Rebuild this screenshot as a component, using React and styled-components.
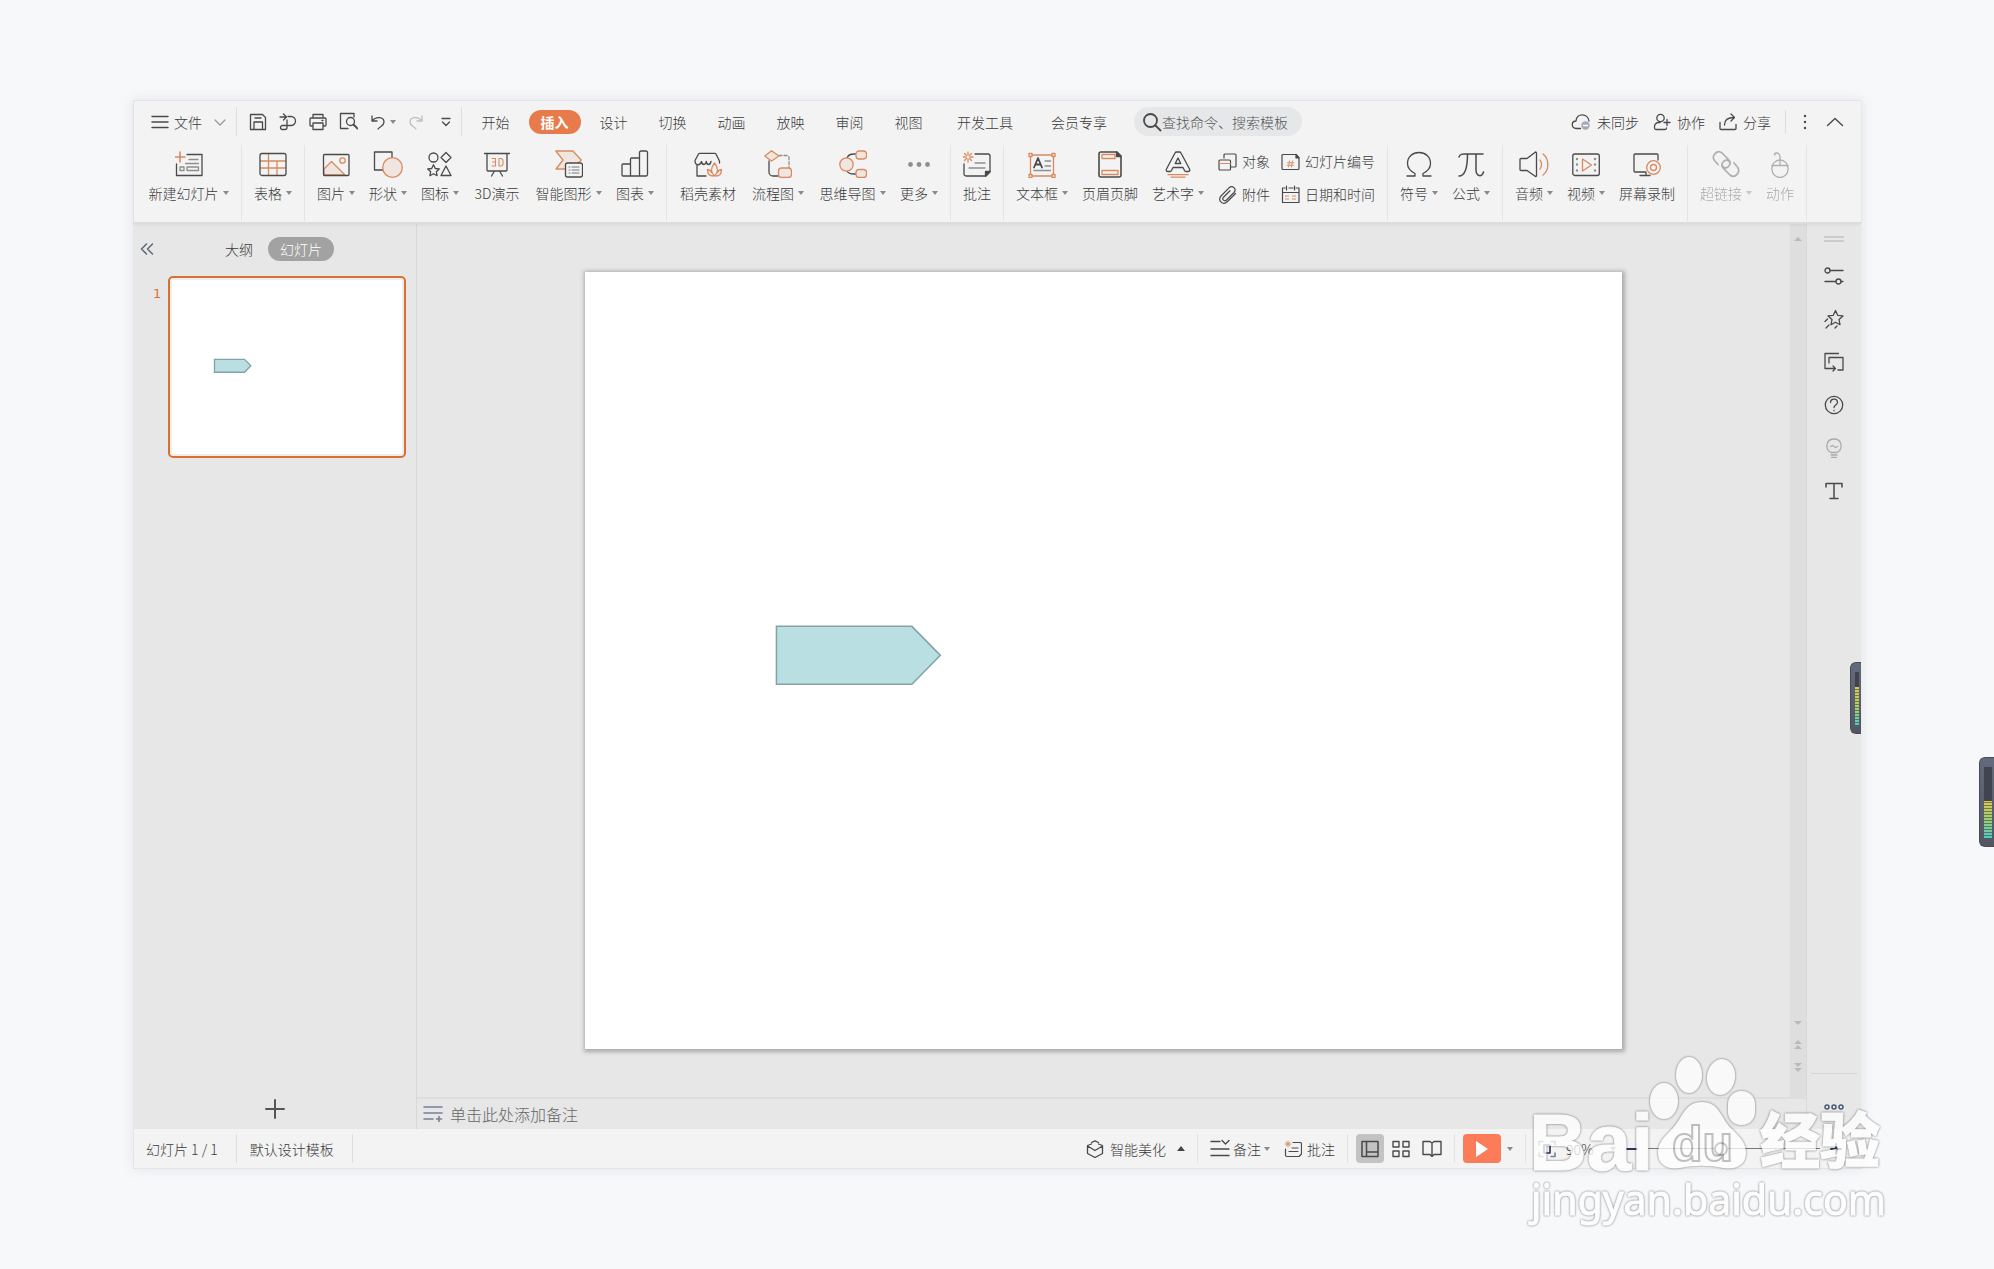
import React, { useState } from 'react';
import styled, { createGlobalStyle, css } from 'styled-components';

const ink = '#4a4a4a';
const accent = '#d98a60';
const accentFill = '#f1e5df';
const soft = '#8f8f8f';

const GlobalStyle = createGlobalStyle`
  * {
    box-sizing: border-box;
  }
  body {
    margin: 0;
    background: #f7f8fa;
    color: #3a3a3a;
    font-family: 'Noto Sans CJK SC', 'Noto Sans', sans-serif;
    font-size: 14px;
    font-weight: 300;
    line-height: 20px;
  }
  button,
  input,
  select {
    margin: 0;
    padding: 0;
    border: 0;
    background: none;
    color: inherit;
    font: inherit;
  }
`;

const Page = styled.div`
  position: relative;
  display: flex;
  min-height: 100vh;
  padding: 100px 132px 100px 133px;
  overflow: hidden;
`;

const AppWindow = styled.div`
  position: relative;
  display: flex;
  flex: 1;
  flex-direction: column;
  min-width: 0;
  border: 1px solid #e4e5e7;
  border-right-color: #ececee;
  background: #e7e7e7;
  box-shadow: 0 0 12px rgba(80, 90, 110, 0.12);
`;

const Header = styled.header`
  position: relative;
  background: #f3f3f3;
  border-bottom: 2px solid #dcdcdc;
  box-shadow: 0 1px 3px rgba(0, 0, 0, 0.06);
`;

const Row = styled.div`
  display: flex;
  align-items: center;
  gap: ${p => p.$gap || 0}px;
`;

const MenuRow = styled(Row)`
  height: 43px;
  padding: 0 17px 2px;
`;

const Divider = styled.span`
  flex: none;
  width: 1px;
  height: ${p => p.$height || 29}px;
  background: #dedede;
`;

const ToolButton = styled.button`
  display: flex;
  flex: none;
  align-items: center;
  gap: ${p => p.$gap || 5}px;
  height: 28px;
  white-space: nowrap;
`;

const CustomizeButton = styled(ToolButton)`
  padding-left: 5px;
`;

const QuickAccess = styled(Row)`
  padding: 0 10px 0 12px;
`;

const Tabs = styled.nav`
  display: flex;
  align-items: center;
  padding-left: 4px;
`;

const TabSlot = styled.div`
  display: flex;
  justify-content: center;
  width: ${p => (p.$wide ? 94 : 59)}px;
`;

const Pill = styled.button`
  height: 24px;
  padding: 0 12px;
  border-radius: 12px;
  white-space: nowrap;
  ${p =>
    p.$active &&
    css`
      background: ${p.$color};
      color: #fff;
      font-weight: ${p.$bold ? 700 : 300};
    `}
`;

const SearchBox = styled.label`
  display: flex;
  align-items: center;
  width: 168px;
  height: 29px;
  margin-left: 8px;
  padding: 0 8px;
  border-radius: 15px;
  background: #e6e7e9;
  input {
    width: 130px;
    outline: none;
  }
  input::placeholder {
    color: #555;
    opacity: 1;
  }
`;

const RightTools = styled(Row)`
  margin-left: auto;
`;

const Ribbon = styled.div`
  display: flex;
  height: 76px;
  margin: 1px 0;
  padding-left: 2px;
`;

const Group = styled.div`
  display: flex;
  gap: 14px;
  padding: 0 12px;
  border-right: 1px solid #e4e4e4;
`;

const RibbonButton = styled.button`
  display: flex;
  flex-direction: column;
  align-items: center;
  gap: 5px;
  width: ${p => p.$width}px;
  padding-top: 5px;
  opacity: ${p => (p.disabled ? 0.4 : 1)};
`;

const RibbonLabel = styled.span`
  display: flex;
  align-items: center;
  gap: 4px;
  white-space: nowrap;
`;

const Caret = styled.i`
  flex: none;
  width: 0;
  height: 0;
  border: ${p => (p.$up ? 4 : 3)}px solid transparent;
  ${p => (p.$up ? 'border-bottom: 5px solid #444' : 'border-top: 4px solid #8a8a8a')};
  border-${p => (p.$up ? 'top' : 'bottom')}-width: 0;
  margin-left: ${p => (p.$up ? 5 : 0)}px;
`;

const SmallCommands = styled.div`
  display: grid;
  grid-template-columns: auto auto;
  grid-auto-rows: 33px;
  column-gap: 11px;
  padding-top: 2px;
`;

const Body = styled.main`
  display: grid;
  flex: 1;
  grid-template-columns: 283px 1fr 54px;
  min-height: 0;
`;

const SlidePanel = styled.aside`
  display: flex;
  flex-direction: column;
  border-right: 1px solid #d8d8d8;
`;

const PanelHead = styled(Row)`
  height: 50px;
  margin-bottom: 2px;
  padding-left: 6px;
`;

const PanelTabs = styled(Row)`
  margin-left: 59px;
`;

const ThumbRow = styled.div`
  display: flex;
  align-items: flex-start;
  padding: 0 10px 0 19px;
`;

const SlideNumber = styled.span`
  width: 15px;
  margin-top: 8px;
  color: #d9702f;
  font: 13px/20px 'DejaVu Sans', sans-serif;
`;

const Thumb = styled.button`
  display: flex;
  flex: 1;
  height: 182px;
  padding: 2px;
  border: 2px solid #d9702f;
  border-radius: 5px;
  background: #eee;
  svg {
    width: 100%;
    height: 100%;
    background: #fff;
  }
`;

const AddSlide = styled.button`
  display: grid;
  place-items: center;
  width: 36px;
  height: 36px;
  margin: auto auto 2px;
`;

const Center = styled.section`
  display: flex;
  flex-direction: column;
  min-width: 0;
`;

const Stage = styled.div`
  display: flex;
  flex: 1;
`;

const Canvas = styled.div`
  display: grid;
  flex: 1;
  place-items: center;
`;

const Slide = styled.div`
  width: 75.5%;
  aspect-ratio: 4 / 3;
  background: #fff;
  box-shadow: 1px 1px 4px 2px rgba(0, 0, 0, 0.26);
  svg {
    display: block;
    width: 100%;
  }
`;

const ScrollBar = styled.div`
  display: flex;
  flex-direction: column;
  align-items: center;
  gap: 14px;
  width: 17px;
  padding: 12px 0 25px;
  border-right: 1px solid #d9d9d9;
  background: #dedede;
  svg:first-child {
    margin-bottom: auto;
  }
`;

const Notes = styled.label`
  display: flex;
  align-items: center;
  gap: 7px;
  height: 32px;
  padding-left: 6px;
  border-top: 2px solid #dedede;
  border-right: 1px solid #d9d9d9;
  input {
    flex: 1;
    font-size: 16px;
    outline: none;
  }
  input::placeholder {
    color: #666;
    opacity: 1;
  }
`;

const SideBar = styled.aside`
  display: flex;
  flex-direction: column;
  align-items: center;
  padding: 12px 4px 19px;
`;

const SideTools = styled.div`
  margin-top: 12px;
`;

const SideButton = styled.button`
  display: grid;
  place-items: center;
  width: 36px;
  height: 43px;
`;

const SideFoot = styled.div`
  display: flex;
  justify-content: center;
  align-self: stretch;
  margin-top: auto;
  padding-top: 30px;
  border-top: 1px solid #d6d6d6;
`;

const StatusBar = styled.footer`
  display: flex;
  align-items: center;
  height: 39px;
  padding-left: 12px;
  background: #f3f3f3;
  white-space: nowrap;
`;

const StatusText = styled.span`
  padding-right: 18px;
  margin-left: ${p => p.$indent || 0}px;
`;

const StatusTools = styled(Row)`
  margin-left: auto;
  padding-right: 7px;
`;

const StatusGroup = styled(Row)`
  padding: 0 ${p => p.$right || 12}px 0 ${p => p.$left || 12}px;
  border-right: ${p => (p.$last ? 0 : 1)}px solid #e2e2e2;
  height: 29px;
`;

const ViewButton = styled.button`
  display: grid;
  place-items: center;
  width: 28px;
  height: 29px;
  border-radius: 4px;
  background: ${p => (p.$active ? '#c3c3c3' : 'none')};
`;

const PlayButton = styled.button`
  display: grid;
  place-items: center;
  width: 38px;
  height: 29px;
  border-radius: 4px;
  background: #fc7b58;
`;

const ZoomSelect = styled.select`
  width: 34px;
  appearance: none;
`;

const ZoomRange = styled.input`
  width: 172px;
  height: 16px;
  appearance: none;
  background: linear-gradient(#777, #777) center / 100% 1px no-repeat;
  &::-webkit-slider-thumb {
    appearance: none;
    width: 14px;
    height: 14px;
    border: 2px solid #222;
    border-radius: 50%;
    background: #f6f6f6;
  }
`;

const Meter = styled.div`
  position: absolute;
  right: 0;
  top: ${p => p.$top}px;
  width: ${p => p.$width}px;
  height: ${p => p.$height}px;
  padding: 9px 2px 8px 4px;
  border: 1px solid #484b54;
  border-right: 0;
  border-radius: 6px 0 0 6px;
  background: linear-gradient(#626a7d, #535662);
`;

const MeterScale = styled.div`
  height: 100%;
  background: repeating-linear-gradient(
      transparent 0 2px,
      rgba(60, 66, 78, 0.6) 2px 3px
    ),
    linear-gradient(#41444e ${p => p.$level}%, #e0c64e ${p => p.$level}%, #a5cf67 70%, #50ccc0);
`;

const Watermark = styled.div`
  position: absolute;
  right: 101px;
  bottom: 38px;
  width: 364px;
  height: 176px;
  color: #fff;
  opacity: 0.77;
  filter: drop-shadow(0 0 1px rgba(0, 0, 0, 0.45)) drop-shadow(0 0 1px rgba(0, 0, 0, 0.25));
  pointer-events: none;
`;

const Mark = styled.span`
  position: absolute;
  left: ${p => p.$left}px;
  top: ${p => p.$top}px;
  font: ${p => p.$font};
  white-space: nowrap;
  -webkit-text-stroke: ${p => p.$stroke || '1px #fff'};
`;

const Paw = styled.svg`
  position: absolute;
  left: 117px;
  top: 1px;
`;

const Svg = ({ size = 28, w, h, color = ink, children, sw = 1.3 }) => (
  <svg
    width={w || size}
    height={h || size}
    viewBox={`0 0 ${w || size} ${h || size}`}
    fill="none"
    stroke={color}
    strokeWidth={sw}
    strokeLinejoin="round"
    strokeLinecap="round"
    aria-hidden="true"
  >
    {children}
  </svg>
);

const icons = {
  newSlide: (
    <Svg>
      <path d="M12 4.500h15v21H1.500V14" />
      <path d="M5 2v10M0 7h10" stroke={accent} strokeWidth="1.600" />
      <path d="M14 9.500h9M10.500 13.500h13M5 17h4v3.500H5zM12 17h11.500v3.500H12z" stroke={soft} />
    </Svg>
  ),
  table: (
    <Svg>
      <path d="M9.500 4v21M1.500 11h25M1.500 18h25M18 11v14" stroke={accent} />
      <rect x="1" y="3.500" width="26" height="22" rx="2" />
    </Svg>
  ),
  picture: (
    <Svg>
      <path d="M2 19l7.500-7.500L23 25H2z" fill={accentFill} stroke={accent} />
      <circle cx="20.500" cy="10.500" r="2.700" stroke={accent} />
      <rect x="1.500" y="4.500" width="25.500" height="21" rx="1" />
    </Svg>
  ),
  shapes: (
    <Svg w={30}>
      <path d="M19 8V2H1.500v18H10" />
      <circle cx="19.500" cy="17.500" r="9.800" fill={accentFill} stroke={accent} />
    </Svg>
  ),
  glyphs: (
    <Svg>
      <circle cx="7.500" cy="7.500" r="4.500" />
      <path d="M20 2.500l5 5-5 5-5-5zM20 16l5 9.500H15zM7.500 14.800l1.800 3.700 4 .5-3 2.700.8 4-3.600-2-3.600 2 .8-4-3-2.700 4-.5z" />
    </Svg>
  ),
  demo3d: (
    <Svg>
      <path d="M1.500 3.500h25M4 3.500v16.500a1 1 0 0 0 1 1h18a1 1 0 0 0 1-1V3.500M11.500 21l-3 5M16.500 21l3 5" />
      <path d="M9 8.500h3.500v7.500H9M9.500 12h3M16 8.500v7.500h1.500a2.500 2.500 0 0 0 2.500-2.500V11a2.500 2.500 0 0 0-2.500-2.500z" stroke={accent} strokeWidth="1.100" />
    </Svg>
  ),
  smartArt: (
    <Svg>
      <path d="M.8 1h17l8.500 9-8.500 9H1l7-9z" fill={accentFill} stroke={accent} />
      <rect x="10.500" y="13" width="17" height="14" rx="2" fill="#f3f3f3" />
      <path d="M14 17h1M17 17h7M14 20h1M17 20h7M14 23h1M17 23h7" stroke="#777" strokeWidth="1" />
    </Svg>
  ),
  chart: (
    <Svg>
      <path d="M9.500 26H2a1 1 0 0 1-1-1V15a1 1 0 0 1 1-1h7.500M18.500 26h-9V9a1 1 0 0 1 1-1h8M18.500 26V2.500a1.500 1.500 0 0 1 1.500-1.500h5A1.500 1.500 0 0 1 26.500 2.500v22a1.500 1.500 0 0 1-1.500 1.500z" />
    </Svg>
  ),
  store: (
    <Svg>
      <path d="M12 26H3V15.500M1 10.500L4.500 4a1.500 1.500 0 0 1 1.200-.700h15a1.500 1.500 0 0 1 1.300.7L25.500 11v2M1 10.500c0 5 5 6 6.500 1 .8 4 4 4 4.700 0 .8 4 4 4 4.800 0" />
      <path d="M20.500 26c-4.500-4-4-8 0-13 4 5 4.500 9 0 13zM19 26c-4 0-5.500-2.500-5.500-6.500 2 .3 3.500 1.500 4 3M22 26c4 0 5.500-2.500 5.500-6.500-2 .3-3.500 1.500-4 3" stroke={accent} />
    </Svg>
  ),
  flow: (
    <Svg>
      <path d="M5 11v11a4 4 0 0 0 4 4h5" />
      <path d="M15 5.500h8a2 2 0 0 1 2 2V18" stroke={soft} strokeDasharray="3 2" />
      <path d="M7.500.8L15 6l-7.500 5L.8 6z" fill={accentFill} stroke={accent} />
      <rect x="14.500" y="18" width="13" height="9.500" rx="3" fill={accentFill} stroke={accent} />
    </Svg>
  ),
  mind: (
    <Svg>
      <path d="M8 8c1-3 3-4 7-4h3M8 21c1 2 3 3 7 3h3" />
      <circle cx="7.500" cy="14.500" r="6.700" fill={accentFill} stroke={accent} />
      <rect x="17" y="1" width="10.500" height="8" rx="3" fill={accentFill} stroke={accent} />
      <rect x="17" y="19.500" width="10.500" height="8" rx="3" fill={accentFill} stroke={accent} />
    </Svg>
  ),
  more: (
    <Svg color="none">
      <g fill={soft}>
        <circle cx="5.500" cy="14.500" r="2.400" />
        <circle cx="14" cy="14.500" r="2.400" />
        <circle cx="22.500" cy="14.500" r="2.400" />
      </g>
    </Svg>
  ),
  comment: (
    <Svg>
      <path d="M12 4h13a2 2 0 0 1 2 2v16l-4 4H3a2 2 0 0 1-2-2V14" />
      <path d="M27 21.500h-4.500V26z" fill={ink} />
      <path d="M5 2v3M5 9v3M0 7h3M7 7h3M1.500 3.500l2 2M6.500 8.500l2 2M8.500 3.500l-2 2M3.500 8.500l-2 2" stroke={accent} />
      <path d="M12 13h10M6 18h16" stroke={soft} />
    </Svg>
  ),
  textBox: (
    <Svg>
      <path d="M4 5h20M4 26h20M2.500 6.500v18M25.500 6.500v18M1 3.500h3v3H1zM24 3.500h3v3h-3zM1 24.500h3v3H1zM24 24.500h3v3h-3z" stroke={accent} />
      <path d="M6 17.500l4-9.500 4 9.500M7.500 14.500h5" strokeWidth="1.800" />
      <path d="M17 11h5.500M17 16h5.500M6 20.500h16.500" stroke={soft} />
    </Svg>
  ),
  headerFooter: (
    <Svg>
      <path d="M21 2H5a2 2 0 0 0-2 2v21a2 2 0 0 0 2 2h18a2 2 0 0 0 2-2V6z" strokeWidth="1.600" />
      <path d="M20.500 2v4.500H25z" fill={ink} />
      <path d="M6 4.500h13v4H6zM6 20.500h16v4H6z" stroke={accent} />
    </Svg>
  ),
  wordArt: (
    <Svg>
      <path d="M12.500 2h3q1 0 1.500 1L25.500 19q1 2.500-1.500 2.500h-2q-1 0-1.500-1L19 17.500H9l-1.500 3q-.5 1-1.500 1H4Q1.500 21.500 2.500 19L11 3q.5-1 1.500-1zM14 8l2.800 5.500h-5.600z" />
      <path d="M4 24.700h20M7 27.200h14" stroke={accent} />
    </Svg>
  ),
  object: (
    <Svg size={19} sw={1.2}>
      <path d="M6 6V3a1 1 0 0 1 1-1h10a1 1 0 0 1 1 1v11a1 1 0 0 1-1 1h-4" />
      <rect x="1" y="8" width="11.500" height="10" rx="1" />
      <path d="M1 11.500h11.500" stroke={accent} />
    </Svg>
  ),
  slideNo: (
    <Svg size={19} sw={1.2}>
      <path d="M15 2.500H2a1 1 0 0 0-1 1v13a1 1 0 0 0 1 1h15a1 1 0 0 0 1-1V6z" />
      <path d="M15 2.500V6h3z" fill={ink} />
      <path d="M8.500 9l-1 6M11.500 9l-1 6M6.500 10.800h6.500M6 13.300h6.500" stroke={accent} strokeWidth=".9" />
    </Svg>
  ),
  clip: (
    <Svg size={19} sw={1.2}>
      <path d="M17.500 8.500L9.500 16.500c-4.500 4.500-10.500-1-6.500-5.500L11 2.800c3.500-3.200 8 1.200 5 4.700l-7.500 7.500c-2.200 2-5-.6-3-2.800L12 5.800" />
    </Svg>
  ),
  date: (
    <Svg size={19} sw={1.2}>
      <path d="M4 3H1.500v14.500H18V3h-3M8 3h4M1.500 7.500H18M5.500 1v4M13.500 1v4" />
      <path d="M4.500 11h3M11.500 11h3M4.500 14h3M11.500 14h3" stroke={accent} />
    </Svg>
  ),
  omega: (
    <Svg>
      <path d="M2 26h8v-2.500C5 21 2.500 17.500 2.500 13.500 2.500 7 7.500 2.500 14 2.500S25.500 7 25.500 13.500c0 4-2.500 7.500-7.500 10V26h8" />
    </Svg>
  ),
  pi: (
    <Svg>
      <path d="M2 7c1-3 3-3 6-3h18M10.500 4c0 10-1 22-8.500 22M19 4v16c0 6 6 8 7.500 2" strokeWidth="1.500" />
    </Svg>
  ),
  audio: (
    <Svg w={30}>
      <path d="M8 8.500l8.500-6.500a1 1 0 0 1 1 1v23a1 1 0 0 1-1 .5L8 20.500H2a1 1 0 0 1-1-1v-10a1 1 0 0 1 1-1z" />
      <path d="M21 10c2 2.500 2 6.500 0 9M24 4c6.500 5 6.500 16 0 21" stroke={accent} />
    </Svg>
  ),
  video: (
    <Svg>
      <rect x=".8" y="4" width="26.500" height="21.500" rx="2" />
      <path d="M10.500 9v12l9-6z" stroke={accent} />
      <path d="M5 9v.1M5 14.500v.1M5 20.500v.1M23 9v.1M23 14.500v.1M23 20.500v.1" stroke={soft} strokeWidth="2.400" />
    </Svg>
  ),
  record: (
    <Svg>
      <path d="M12 22H2a1 1 0 0 1-1-1V5a1 1 0 0 1 1-1h22a1 1 0 0 1 1 1v5M13 22v3M7 25.500h10" />
      <circle cx="20.500" cy="17.500" r="6.800" stroke={accent} />
      <circle cx="20.500" cy="17.500" r="3" stroke={accent} />
    </Svg>
  ),
  link: (
    <Svg sw={1.7}>
      <path d="M6 14.500l-3.500-4C-1 6 5-1 10 3l6.500 6.500c2 2 2 5-.5 7.500-2 1.500-4 1-5-.5M22 13l3.500 4C29 22 23 29 18 25l-6.500-6.500c-2-2-2-5 .5-7.500 2-1.500 4-1 5 .5" />
    </Svg>
  ),
  mouse: (
    <Svg>
      <rect x="6" y="10" width="16" height="17.500" rx="8" />
      <path d="M6 15.500h16M14 15.500V7c0-2.500-1.500-4-3.500-4S8 4 9 5" />
    </Svg>
  ),
  menu: (
    <Svg size={18} sw={1.4}>
      <path d="M1 3.500h16M1 9h16M1 14.500h16" />
    </Svg>
  ),
  chevron: (
    <Svg w={12} h={12} color="#999">
      <path d="M1 4l5 5 5-5" />
    </Svg>
  ),
  save: (
    <Svg size={18}>
      <path d="M1.500 1.500h12l3 3v12h-15zM5 16.500V9h8.500v7.500M6 5h6" />
    </Svg>
  ),
  exportPdf: (
    <Svg size={18}>
      <path d="M1 4h6M4.500 1L7.500 4l-3 3M9 3.500h3a4.500 4.500 0 0 1 0 9H3.500a2 2 0 0 0 0 4H6a2 2 0 0 0 2-2V7" />
    </Svg>
  ),
  print: (
    <Svg size={18}>
      <path d="M4 5V1.500h10V5M4 13H2a1 1 0 0 1-1-1V6a1 1 0 0 1 1-1h14a1 1 0 0 1 1 1v6a1 1 0 0 1-1 1h-2M4 10h10v6.500H4zM13 7.500h1" />
    </Svg>
  ),
  preview: (
    <Svg size={19}>
      <path d="M15 5V1.500H1.500v15H9" />
      <circle cx="11.500" cy="9.500" r="4" />
      <path d="M14.500 12.500l4 4" strokeWidth="1.800" />
    </Svg>
  ),
  undo: (
    <Svg size={16}>
      <path d="M2 2v5h5M2 7c4-5 12-4.500 12 1 0 4-4 4-6 7" />
    </Svg>
  ),
  redo: (
    <Svg size={16} color="#bdbdbd">
      <path d="M14 2v5H9M14 7C10 2 2 2.500 2 8c0 4 4 4 6 7" />
    </Svg>
  ),
  customize: (
    <Svg size={10}>
      <path d="M1 1.500h8M1.500 5L5 8.500 8.500 5" />
    </Svg>
  ),
  search: (
    <Svg w={20} h={20} sw={1.8}>
      <circle cx="8.500" cy="8.500" r="6.500" />
      <path d="M13.500 13.500l5 5" />
    </Svg>
  ),
  cloud: (
    <Svg size={20}>
      <path d="M9.500 16.500H5C-.5 15.500.5 9 5 9c.5-8.500 12-8 13 0" />
      <circle cx="14.500" cy="13.500" r="4.200" fill="#a3a9b8" stroke="none" />
      <path d="M12.500 13.500h4" stroke="#fff" />
    </Svg>
  ),
  person: (
    <Svg size={18}>
      <circle cx="7.500" cy="5" r="3.700" />
      <path d="M7 9.500H5.500A4 4 0 0 0 1.500 13.500V15a1.500 1.500 0 0 0 1.500 1.500h9a1.500 1.500 0 0 0 1.500-1.500M14 6.500v6M11 9.500h6" />
    </Svg>
  ),
  share: (
    <Svg size={18}>
      <path d="M1 9.500v6a1 1 0 0 0 1 1h14a1 1 0 0 0 1-1v-4M5.500 12c0-5 3-7.500 9.500-7.500M12 1l3.500 3.500L12 8" />
    </Svg>
  ),
  dots: (
    <Svg w={12} h={18} sw={2.4}>
      <path d="M5 3v.1M5 9v.1M5 15v.1" />
    </Svg>
  ),
  up: (
    <Svg w={18} h={18} sw={1.4}>
      <path d="M1.500 12.500L9 5.500l7.500 7" />
    </Svg>
  ),
  collapse: (
    <Svg size={14} color="#5d6578" sw={1.5}>
      <path d="M6.500 2L1.500 7l5 5M12.500 2l-5 5 5 5" />
    </Svg>
  ),
  plus: (
    <Svg size={20} color="#555" sw={2}>
      <path d="M10 1v18M1 10h18" />
    </Svg>
  ),
  notes: (
    <Svg size={20} color="#77809a" sw={1.6}>
      <path d="M1 3h18M1 9h18M1 15h9M13.500 15h5M16 12.500v5" />
    </Svg>
  ),
  grip: (
    <Svg w={20} h={6} color="#c2c2c2">
      <path d="M.5 1h19M.5 5h19" />
    </Svg>
  ),
  settings: (
    <Svg size={20}>
      <circle cx="3.500" cy="4.500" r="2.500" />
      <circle cx="14.500" cy="15.500" r="2.500" />
      <path d="M6 4.500h13M1 15.500h11M17 15.500h2" />
    </Svg>
  ),
  star: (
    <Svg size={20}>
      <path d="M11.500 1.500l2.200 4.800 5.300.6-4 3.600 1 5.200-4.500-2.500L7 15.700l1-5.200-4-3.600 5.300-.6zM3.500 10L1 12.500M5 16l-3 3M13 17l-2 2" />
    </Svg>
  ),
  clone: (
    <Svg size={20}>
      <path d="M14.500 1.500H1v15h10M9 14l2.500 2.500L9 19M5 11V5.500h14V18h-5" />
    </Svg>
  ),
  help: (
    <Svg size={20}>
      <circle cx="10" cy="10" r="8.700" />
      <path d="M6.500 7.500c0-4.500 7-4.500 7 0 0 2.500-3.500 2.500-3.500 5M10 15.500v.2" />
    </Svg>
  ),
  bulb: (
    <Svg size={20} color="#ababab">
      <path d="M7 14.500C.5 11 2 1 10 1s9.500 10 3 13.500zM7 17h6M7.500 19.500h5M6.500 8.500l2-1 3 2 2-1" />
    </Svg>
  ),
  textTool: (
    <Svg size={20} sw={1.5}>
      <path d="M2 6V2.500h16V6M10 2.500v15M6 17.500h8" />
    </Svg>
  ),
  rings: (
    <Svg w={20} h={6} color="#4b5874" sw={1.5}>
      <circle cx="3" cy="3" r="2" />
      <circle cx="10" cy="3" r="2" />
      <circle cx="17" cy="3" r="2" />
    </Svg>
  ),
  cube: (
    <Svg size={18}>
      <path d="M5.500 4L1.500 5.500v8L9 17.500l7.500-4v-8L12.500 4M1.500 6L9 10.500 16.500 6M5.500 2.500L9 .8l3.500 1.700" />
    </Svg>
  ),
  memo: (
    <Svg size={20} sw={1.4}>
      <path d="M1 2.500h9M12 1.500l3.500 3.500L19 1.500M1 10h18M1 16.500h18" />
    </Svg>
  ),
  remark: (
    <Svg size={18} sw={1.2}>
      <path d="M9 2.500h7a1.500 1.500 0 0 1 1.500 1.500v10L15 16.500H3A1.500 1.500 0 0 1 1.500 15V9M8 8h6M5 11.500h9" />
      <path d="M4 1v6M1 4h6M2 2l4 4M6 2L2 6" stroke={accent} strokeWidth=".9" />
    </Svg>
  ),
  normalView: (
    <Svg size={18} sw={1.5}>
      <path d="M1 1.500h16v15H1zM5.500 1.500v15M5.500 12H17" />
    </Svg>
  ),
  gridView: (
    <Svg size={18} sw={1.4}>
      <path d="M1 1.500h6v5.500H1zM11 1.500h6v5.500h-6zM1 11h6v5.500H1zM11 11h6v5.500h-6z" />
    </Svg>
  ),
  readView: (
    <Svg size={20} sw={1.4}>
      <path d="M10 4L8 2.500H1v13h7l2 2 2-2h7v-13h-7zM10 4v13.500" />
    </Svg>
  ),
  fit: (
    <Svg size={18} color="#2b3854" sw={1.6}>
      <path d="M6 5h6v8H6z" />
      <path d="M1 5V1.500h4M13 1.500h4V5M1 13v3.500h4M13 16.500h4V13" stroke="#7b8398" />
    </Svg>
  ),
  minus: (
    <Svg w={12} h={12} color="#2b3854" sw={1.8}>
      <path d="M1 6h10" />
    </Svg>
  ),
  zoomIn: (
    <Svg w={12} h={12} color="#2b3854" sw={1.8}>
      <path d="M1 6h10M6 1v10" />
    </Svg>
  ),
};

const ribbonGroups = [
  [{ icon: 'newSlide', label: '新建幻灯片', width: 81, menu: true }],
  [{ icon: 'table', label: '表格', width: 38, menu: true }],
  [
    { icon: 'picture', label: '图片', width: 38, menu: true },
    { icon: 'shapes', label: '形状', width: 38, menu: true },
    { icon: 'glyphs', label: '图标', width: 38, menu: true },
    { icon: 'demo3d', label: '3D演示', width: 48 },
    { icon: 'smartArt', label: '智能图形', width: 67, menu: true },
    { icon: 'chart', label: '图表', width: 38, menu: true },
  ],
  [
    { icon: 'store', label: '稻壳素材', width: 58 },
    { icon: 'flow', label: '流程图', width: 54, menu: true },
    { icon: 'mind', label: '思维导图', width: 67, menu: true },
    { icon: 'more', label: '更多', width: 38, menu: true },
  ],
  [{ icon: 'comment', label: '批注', width: 28 }],
  [
    { icon: 'textBox', label: '文本框', width: 52, menu: true },
    { icon: 'headerFooter', label: '页眉页脚', width: 56 },
    { icon: 'wordArt', label: '艺术字', width: 52, menu: true },
  ],
  [
    { icon: 'omega', label: '符号', width: 38, menu: true },
    { icon: 'pi', label: '公式', width: 38, menu: true },
  ],
  [
    { icon: 'audio', label: '音频', width: 38, menu: true },
    { icon: 'video', label: '视频', width: 38, menu: true },
    { icon: 'record', label: '屏幕录制', width: 56 },
  ],
  [
    { icon: 'link', label: '超链接', width: 52, menu: true, disabled: true },
    { icon: 'mouse', label: '动作', width: 28, disabled: true },
  ],
];

// shown beside 艺术字, two rows of two
const smallCommands = [
  { icon: 'object', label: '对象' },
  { icon: 'slideNo', label: '幻灯片编号' },
  { icon: 'clip', label: '附件' },
  { icon: 'date', label: '日期和时间' },
];

const tabs = ['开始', '插入', '设计', '切换', '动画', '放映', '审阅', '视图', '开发工具', '会员专享'];

const sideTools = [
  ['settings', '对象属性'],
  ['star', '动画窗格'],
  ['clone', '幻灯片切换'],
  ['help', '帮助'],
  ['bulb', '提示'],
  ['textTool', '文字'],
];

const SlideArt = ({ stroke }) => (
  <svg viewBox="0 0 1037 778" aria-hidden="true">
    <path
      d="M191.500 354.500H327L355.500 383.500 327 412.500H191.500z"
      fill="#b9dfe2"
      stroke="#84a3a6"
      strokeWidth={stroke}
    />
  </svg>
);

function RibbonBar() {
  return (
    <Ribbon>
      {ribbonGroups.map(group => (
        <Group key={group[0].label}>
          {group.map(item => (
            <RibbonButton key={item.label} $width={item.width} disabled={item.disabled}>
              {icons[item.icon]}
              <RibbonLabel>
                {item.label}
                {item.menu && <Caret />}
              </RibbonLabel>
            </RibbonButton>
          ))}
          {group[0].icon === 'textBox' && (
            <SmallCommands>
              {smallCommands.map(cmd => (
                <ToolButton key={cmd.label}>
                  {icons[cmd.icon]}
                  {cmd.label}
                </ToolButton>
              ))}
            </SmallCommands>
          )}
        </Group>
      ))}
    </Ribbon>
  );
}

function TopBar() {
  const [active, setActive] = useState('插入');
  return (
    <Header>
      <MenuRow>
        <ToolButton>
          {icons.menu}
          文件
        </ToolButton>
        <QuickAccess>{icons.chevron}</QuickAccess>
        <Divider />
        <QuickAccess $gap={12}>
          <ToolButton aria-label="保存">{icons.save}</ToolButton>
          <ToolButton aria-label="输出为PDF">{icons.exportPdf}</ToolButton>
          <ToolButton aria-label="打印">{icons.print}</ToolButton>
          <ToolButton aria-label="打印预览">{icons.preview}</ToolButton>
          <ToolButton $gap={4} aria-label="撤销">
            {icons.undo}
            <Caret />
          </ToolButton>
          <ToolButton aria-label="恢复">{icons.redo}</ToolButton>
          <CustomizeButton aria-label="自定义">{icons.customize}</CustomizeButton>
        </QuickAccess>
        <Divider />
        <Tabs>
          {tabs.map(tab => (
            <TabSlot key={tab} $wide={tab.length > 2}>
              <Pill
                $active={tab === active}
                $color="#e77b4b"
                $bold
                onClick={() => setActive(tab)}
              >
                {tab}
              </Pill>
            </TabSlot>
          ))}
        </Tabs>
        <SearchBox>
          {icons.search}
          <input aria-label="搜索" placeholder="查找命令、搜索模板" />
        </SearchBox>
        <RightTools $gap={14}>
          <ToolButton $gap={6}>
            {icons.cloud}
            未同步
          </ToolButton>
          <ToolButton $gap={6}>
            {icons.person}
            协作
          </ToolButton>
          <ToolButton $gap={6}>
            {icons.share}
            分享
          </ToolButton>
          <Divider $height={24} />
          <ToolButton aria-label="更多选项">{icons.dots}</ToolButton>
          <ToolButton aria-label="收起功能区">{icons.up}</ToolButton>
        </RightTools>
      </MenuRow>
      <RibbonBar />
    </Header>
  );
}

function Outline() {
  return (
    <SlidePanel>
      <PanelHead>
        <ToolButton aria-label="收起">{icons.collapse}</ToolButton>
        <PanelTabs $gap={3}>
          <Pill>大纲</Pill>
          <Pill $active $color="#a2a2a2">
            幻灯片
          </Pill>
        </PanelTabs>
      </PanelHead>
      <ThumbRow>
        <SlideNumber>1</SlideNumber>
        <Thumb aria-label="第 1 张幻灯片">
          <SlideArt stroke={6} />
        </Thumb>
      </ThumbRow>
      <AddSlide aria-label="新建幻灯片">{icons.plus}</AddSlide>
    </SlidePanel>
  );
}

function Workspace() {
  return (
    <Center>
      <Stage>
        <Canvas>
          <Slide>
            <SlideArt stroke={1.5} />
          </Slide>
        </Canvas>
        <ScrollBar>
          <Svg w={8} h={5} color="none">
            <path d="M0 5l4-4 4 4z" fill="#b9b9b9" />
          </Svg>
          <Svg w={8} h={5} color="none">
            <path d="M0 0l4 4 4-4z" fill="#b9b9b9" />
          </Svg>
          <Svg w={8} h={9} color="none">
            <path d="M0 4l4-4 4 4zM0 9l4-4 4 4z" fill="#b9b9b9" />
          </Svg>
          <Svg w={8} h={9} color="none">
            <path d="M0 0l4 4 4-4zM0 5l4 4 4-4z" fill="#b9b9b9" />
          </Svg>
        </ScrollBar>
      </Stage>
      <Notes>
        {icons.notes}
        <input aria-label="备注" placeholder="单击此处添加备注" />
      </Notes>
    </Center>
  );
}

function Status() {
  const [zoom, setZoom] = useState(42);
  return (
    <StatusBar>
      <StatusText>幻灯片 1 / 1</StatusText>
      <Divider />
      <StatusText $indent={13}>默认设计模板</StatusText>
      <Divider />
      <StatusTools>
        <StatusGroup>
          <ToolButton $gap={6}>
            {icons.cube}
            智能美化
            <Caret $up />
          </ToolButton>
        </StatusGroup>
        <StatusGroup $gap={14}>
          <ToolButton $gap={3}>
            {icons.memo}
            备注
            <Caret />
          </ToolButton>
          <ToolButton>
            {icons.remark}
            批注
          </ToolButton>
        </StatusGroup>
        <StatusGroup $left={8} $right={8} $gap={3}>
          <ViewButton $active aria-label="普通视图">
            {icons.normalView}
          </ViewButton>
          <ViewButton aria-label="幻灯片浏览">{icons.gridView}</ViewButton>
          <ViewButton aria-label="阅读视图">{icons.readView}</ViewButton>
        </StatusGroup>
        <StatusGroup $left={8} $gap={6}>
          <PlayButton aria-label="播放">
            <Svg w={12} h={16} color="none">
              <path d="M0 0l12 8-12 8z" fill="#fff" />
            </Svg>
          </PlayButton>
          <Caret />
        </StatusGroup>
        <StatusGroup $last $gap={10}>
          {icons.fit}
          <ZoomSelect aria-label="缩放比例" defaultValue="90%">
            <option>90%</option>
          </ZoomSelect>
          <Caret />
          <ToolButton aria-label="缩小">{icons.minus}</ToolButton>
          <ZoomRange
            type="range"
            aria-label="缩放"
            value={zoom}
            onChange={e => setZoom(Number(e.target.value))}
          />
          <ToolButton aria-label="放大">{icons.zoomIn}</ToolButton>
        </StatusGroup>
      </StatusTools>
    </StatusBar>
  );
}

export default function App() {
  return (
    <>
      <GlobalStyle />
      <Page>
        <AppWindow>
          <TopBar />
          <Body>
            <Outline />
            <Workspace />
            <SideBar>
              {icons.grip}
              <SideTools>
                {sideTools.map(([icon, name]) => (
                  <SideButton key={icon} aria-label={name}>
                    {icons[icon]}
                  </SideButton>
                ))}
              </SideTools>
              <SideFoot>{icons.rings}</SideFoot>
            </SideBar>
          </Body>
          <Status />
          <Meter $top={561} $width={11} $height={72}>
            <MeterScale $level={28} />
          </Meter>
        </AppWindow>
        <Meter $top={757} $width={15} $height={90}>
          <MeterScale $level={48} />
        </Meter>
        <Watermark>
          <Paw width="112" height="120" viewBox="0 0 112 120" fill="currentColor">
            <ellipse cx="18" cy="45" rx="14" ry="18" />
            <ellipse cx="43" cy="19" rx="13" ry="18" />
            <ellipse cx="75" cy="21" rx="14" ry="18" transform="rotate(8 75 21)" />
            <rect x="82" y="35" width="27" height="34" rx="13" />
            <path d="M56 46c-18 0-19 16-30 27C17 82 12 87 12 97c0 12 10 17 22 15 15-3 29-3 43 0 13 2 23-3 23-15 0-10-6-16-14-24-12-11-12-27-30-27z" />
          </Paw>
          <Mark $left={0} $top={48} $font="bold 80px/80px 'Liberation Sans', sans-serif">
            Bai
          </Mark>
          <Mark
            $left={143}
            $top={59}
            $font="bold 50px/60px 'Liberation Sans', sans-serif"
            $stroke="2px #b0b0b0"
          >
            du
          </Mark>
          <Mark $left={231} $top={52} $font="900 60px/60px 'Noto Sans CJK SC', sans-serif">
            经验
          </Mark>
          <Mark $left={2} $top={119} $font="41px/50px 'Noto Sans', sans-serif">
            jingyan.baidu.com
          </Mark>
        </Watermark>
      </Page>
    </>
  );
}
